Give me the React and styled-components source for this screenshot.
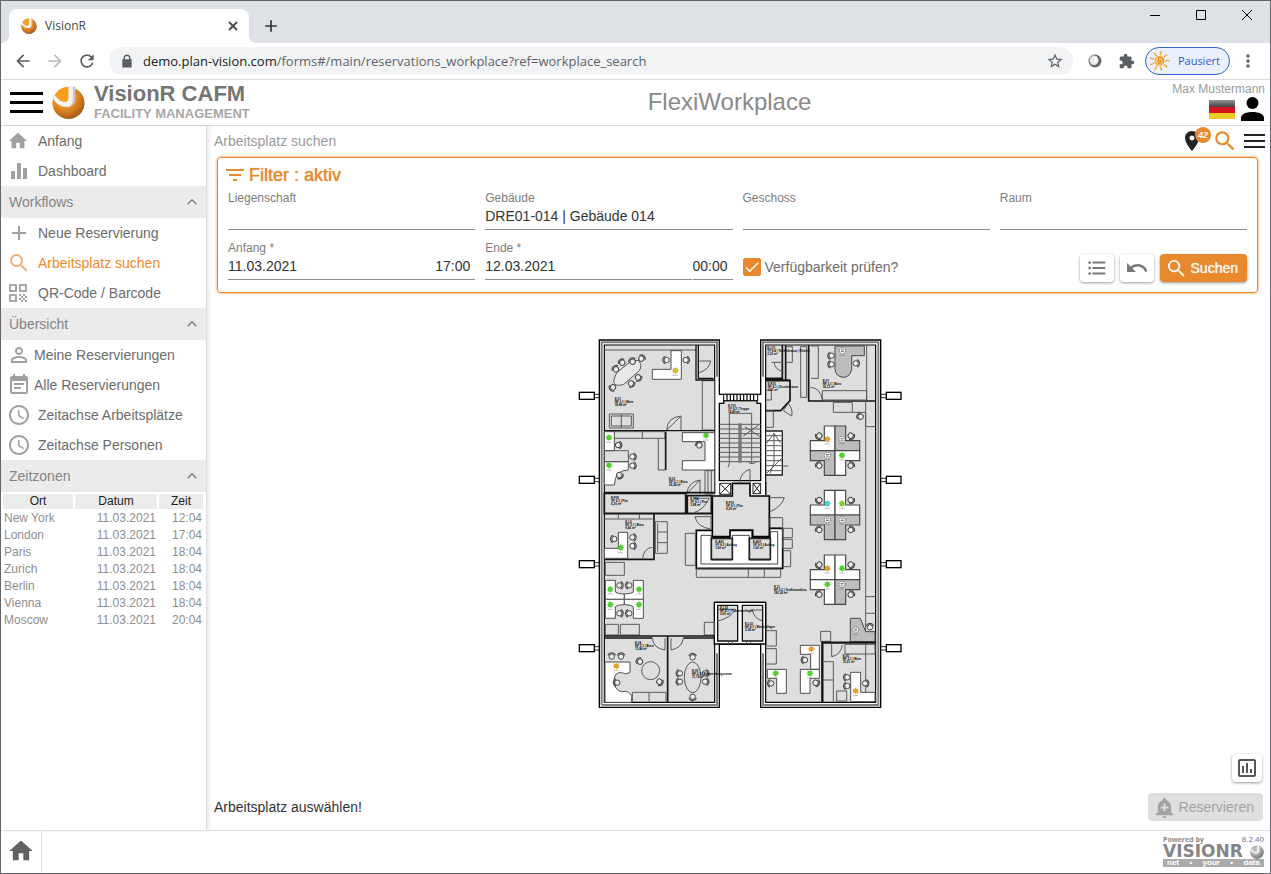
import React, { useState } from "react";
import styled, { createGlobalStyle, css } from "styled-components";
import {
  MdAccessTime, MdAdd, MdAddAlert, MdArrowBack, MdArrowForward, MdCheck, MdClose, MdEqualizer,
  MdEventNote, MdExpandLess, MdFilterList, MdFormatListBulleted, MdHome,
  MdMoreVert, MdOutlineAssessment, MdPersonOutline, MdPlace, MdRefresh,
  MdSearch, MdStarBorder, MdUndo,
} from "react-icons/md";

const ORANGE = "#e8892e";

const GlobalStyle = createGlobalStyle`
  *, *::before, *::after { box-sizing: border-box; }
  body { margin: 0; background: #fff; color: #333; font: 14px/16px "Liberation Sans", Arial, sans-serif; }
  button, input { font: inherit; color: inherit; }
  button { padding: 0; border: 0; background: none; cursor: pointer; }
  a { color: inherit; text-decoration: none; }
  svg { display: block; flex: none; }
`;

/* ---------- browser frame ---------- */

const Window = styled.div`
  display: flex;
  flex-direction: column;
  min-height: 100vh;
  border: 1px solid #66676a;
`;
const TabStrip = styled.div`
  display: flex;
  height: 42px;
  padding: 8px 17px 0 8px;
  background: #dee1e6;
`;
const Tab = styled.div`
  position: relative;
  display: flex;
  align-items: center;
  gap: 8px;
  width: 240px;
  padding: 0 6px 0 12px;
  border-radius: 8px 8px 0 0;
  background: #fff;
  color: #45484c;
  font: 12px/16px "Open Sans", sans-serif;
  &::before, &::after {
    content: "";
    position: absolute;
    bottom: 0;
    width: 8px;
    height: 8px;
  }
  &::before { left: -8px; background: radial-gradient(circle at 0 0, #dee1e6 8px, #fff 8px); }
  &::after { right: -8px; background: radial-gradient(circle at 100% 0, #dee1e6 8px, #fff 8px); }
`;
const TabName = styled.span` flex: 1; `;
const NewTab = styled.button` width: 44px; display: grid; place-items: center; color: #333; `;
const WindowButtons = styled.div`
  display: flex;
  align-items: flex-start;
  gap: 34px;
  margin-left: auto;
`;
const WindowButton = styled.button` display: block; width: 12px; height: 12px; color: #000; `;

const Toolbar = styled.div`
  display: flex;
  align-items: center;
  height: 37px;
  padding: 0 12px 0 12px;
  border-bottom: 1px solid #dadce0;
  color: #5a5d61;
`;
const NavButtons = styled.div` display: flex; gap: 12px; margin-right: 12px; `;
const IconButton = styled.button`
  display: grid;
  place-items: center;
  width: ${(p) => p.$width || 20}px;
  height: 28px;
  color: ${(p) => p.$tone || "inherit"};
`;
const Address = styled.div`
  flex: 1;
  min-width: 0;
  display: flex;
  align-items: center;
  gap: 9px;
  height: 28px;
  padding: 0 8px 0 11px;
  border-radius: 14px;
  background: #f1f3f4;
  font: 13px/20px "Open Sans", sans-serif;
`;
const Url = styled.span`
  flex: 1;
  min-width: 0;
  overflow: hidden;
  white-space: nowrap;
  color: #5f6368;
  b { font-weight: 400; color: #202124; }
`;
const Extensions = styled.div` display: flex; align-items: center; gap: 12px; margin: 0 8px 0 12px; `;
const Profile = styled.button`
  display: flex;
  align-items: center;
  gap: 8px;
  height: 28px;
  margin-right: 8px;
  padding: 0 9px 0 3px;
  border: 1px solid #2f64c8;
  border-radius: 14px;
  background: #e9f0fb;
  color: #3059c4;
  font: 11px/16px "Open Sans", sans-serif;
`;

/* ---------- application header ---------- */

const AppHeader = styled.header`
  display: grid;
  grid-template-columns: 280px 1fr 96px;
  align-items: center;
  height: 46px;
  padding: 0 5px 1px 9px;
  border-bottom: 1px solid #dedede;
`;
const Brand = styled.div` display: flex; align-items: center; gap: 9px; `;
const BrandText = styled.div`
  font-weight: 700;
  strong { display: block; font-size: 22px; line-height: 24px; color: #757575; }
  span { display: block; font-size: 13px; line-height: 16px; color: #a8a8a8; }
`;
const AppTitle = styled.h1` margin: 0; font-size: 24px; line-height: 28px; font-weight: 400; text-align: center; color: #8a8a8a; `;
const User = styled.div`
  justify-self: end;
  display: flex;
  flex-direction: column;
  align-items: flex-end;
  font-size: 12px;
  line-height: 14px;
  color: #9b9b9b;
`;
const UserIcons = styled.div` display: flex; align-items: center; gap: 5px; height: 26px; `;

/* ---------- sidebar ---------- */

const Body = styled.div` flex: 1; display: flex; `;
const Sidebar = styled.nav`
  width: 206px;
  flex: none;
  border-right: 1px solid #dedede;
  box-shadow: 2px 0 4px #0000001a;
`;
const IconSlot = styled.span`
  display: grid;
  place-items: center;
  width: 22px;
  height: 24px;
  color: ${(p) => (p.$active ? "#f2b077" : "#a0a0a0")};
`;
const NavLink = styled.a`
  display: flex;
  align-items: center;
  gap: ${(p) => (p.$tight ? 5 : 9)}px;
  height: 30px;
  padding-left: 6px;
  color: ${(p) => (p.$active ? "#ee8a28" : "#6c6c6c")};
`;
const SectionHeader = styled.button`
  display: flex;
  align-items: center;
  justify-content: space-between;
  width: 100%;
  height: 32px;
  padding: 0 4px 0 8px;
  background: #ebebeb;
  color: #848484;
`;
const ZoneTable = styled.table`
  width: 204px;
  table-layout: fixed;
  border-collapse: separate;
  border-spacing: 2px;
  font-size: 12px;
  line-height: 15px;
  color: #8e8e8e;
  th { padding: 0; background: #ececec; font-weight: 400; color: #222; }
  td { padding: 0 1px; text-align: right; }
  td:first-child { text-align: left; }
  th:nth-child(1) { width: 70px; }
  th:nth-child(3) { width: 44px; }
`;

/* ---------- main area ---------- */

const Main = styled.main` flex: 1; min-width: 0; display: flex; flex-direction: column; `;
const PageBar = styled.div`
  display: flex;
  align-items: center;
  justify-content: space-between;
  height: 31px;
  padding: 0 5px 2px 7px;
  color: #9b9b9b;
`;
const PageTools = styled.div` display: flex; align-items: center; gap: 6px; color: #222; `;
const PinButton = styled.button` position: relative; width: 26px; height: 24px; `;
const Badge = styled.span`
  position: absolute;
  top: -2px;
  right: -5px;
  z-index: 1;
  width: 16px;
  height: 16px;
  border-radius: 8px;
  background: ${ORANGE};
  color: #fff;
  font: italic 700 9px/16px "Liberation Sans", sans-serif;
  text-align: center;
`;
const FilterBox = styled.form`
  margin: 0 12px 0 10px;
  padding: 5px 10px 12px;
  border: 1px solid ${ORANGE};
  border-radius: 4px;
  box-shadow: 0 0 3px ${ORANGE};
`;
const FilterTitle = styled.h2`
  display: flex;
  align-items: center;
  gap: 2px;
  height: 24px;
  margin: 0 0 3px -5px;
  font-size: 18px;
  line-height: 20px;
  font-weight: 400;
  color: ${ORANGE};
  text-shadow: 0 0 1px ${ORANGE};
`;
const FieldGrid = styled.div`
  display: grid;
  grid-template-columns: repeat(4, minmax(0, 1fr));
  gap: 10px;
`;
const Field = styled.div`
  label { display: block; font-size: 12px; line-height: 16px; color: #7d7d7d; }
`;
const InputRow = styled.div` display: flex; gap: ${(p) => (p.$split ? 1 : 0)}px; `;
const Input = styled.input`
  flex: 1;
  min-width: 0;
  width: 100%;
  height: 24px;
  padding: 0 0 3px;
  border: 0;
  border-bottom: 1px solid #8c8c8c;
  background: none;
  outline: 0;
  color: #333;
  ${(p) => p.$time && css` flex: 0 0 40px; padding-right: 5px; text-align: right; `}
`;
const CheckLabel = styled.label`
  align-self: end;
  position: relative;
  display: flex;
  align-items: center;
  gap: 4px;
  height: 28px;
  margin-bottom: -1px;
  color: #6c6c6c;
  white-space: nowrap;
  input { appearance: none; width: 18px; height: 18px; margin: 0; border-radius: 2px; background: #fff; border: 1px solid ${ORANGE}; }
  input:checked { background: ${ORANGE}; }
  svg { position: absolute; left: 0; color: #fff; pointer-events: none; }
`;
const Actions = styled.div`
  align-self: end;
  display: flex;
  justify-content: flex-end;
  gap: 6px;
  margin-bottom: -2px;
`;
const Button = styled.button`
  display: flex;
  align-items: center;
  justify-content: center;
  gap: 3px;
  height: 28px;
  min-width: ${(p) => (p.$wide ? 0 : 34)}px;
  padding: ${(p) => (p.$wide ? "0 9px 0 5px" : 0)};
  border-radius: 4px;
  background: ${(p) => (p.$primary ? ORANGE : "#fff")};
  color: ${(p) => (p.$primary ? "#fff6ec" : "#777")};
  text-shadow: ${(p) => (p.$primary ? "0 0 1px #fff" : "none")};
  box-shadow: 0 1px 3px #00000066;
  &:disabled { background: #dfdfdf; color: #a3a3a3; box-shadow: none; cursor: default; }
`;
const Canvas = styled.div` flex: 1; display: flex; align-items: center; justify-content: center; `;
const ChartRow = styled.div` display: flex; justify-content: flex-end; padding: 0 8px 11px; `;
const ChartButton = styled(Button)` min-width: 30px; color: #555; `;
const BottomRow = styled.div`
  display: flex;
  align-items: center;
  justify-content: space-between;
  padding: 0 7px 9px 7px;
`;

const Footer = styled.footer`
  display: flex;
  justify-content: space-between;
  height: 43px;
  border-top: 1px solid #dedede;
`;
const HomeLink = styled.a`
  display: grid;
  place-items: center;
  width: 41px;
  padding-bottom: 2px;
  border-right: 1px solid #dedede;
  color: #616161;
`;
const Powered = styled.div` width: 101px; margin: 4px 6px 0 0; color: #8b8b8b; `;
const PoweredTop = styled.div`
  display: flex;
  justify-content: space-between;
  font: 700 7px/9px "Open Sans", sans-serif;
  span + span { font: 8px/9px "Liberation Sans", sans-serif; color: #77718c; }
`;
const Wordmark = styled.div`
  display: flex;
  align-items: center;
  justify-content: space-between;
  font: 700 17px/15px "DejaVu Sans", sans-serif;
  color: #858585;
`;
const Slogan = styled.div`
  display: flex;
  justify-content: space-between;
  padding: 0 4px;
  background: #ababab;
  color: #fff;
  font: 700 8px/8px "Liberation Sans", sans-serif;
`;

/* ---------- icons ---------- */

function Ball({ size, grey }) {
  const id = grey ? "ballGrey" : "ballOrange" + size;
  return (
    <svg width={size} height={size} viewBox="0 0 34 34" aria-hidden="true">
      <defs>
        <radialGradient id={id} cx=".38" cy=".32" r=".75">
          <stop offset="0" stopColor={grey ? "#d8d8d8" : "#ffb52e"} />
          <stop offset=".5" stopColor={grey ? "#a9a9a9" : "#e68a22"} />
          <stop offset="1" stopColor={grey ? "#6f6f6f" : "#9a5518"} />
        </radialGradient>
      </defs>
      <circle cx="17" cy="17.500" r="16.500" fill={`url(#${id})`} />
      <path d="M17 0h6.500v12c0 6-3 9.500-8.500 9.500C8 21.500 3 17 0 11l1.500-3.500C5 13 9 16.500 13 16.500c3 0 4-2 4-5z" fill="#f4f2f4" />
      <path d="M21.500 1h2.500v12c0 6-4 9-8 9.500 4-2 5.500-5 5.500-9z" fill="#c9c4cb" />
      <path d="M7 4.500C10 2 13 1 16.500 1v10c0 3-1 4.500-3 4.500-3 0-7-3-9.500-7z" fill={grey ? "#bdbdbd" : "#f6a021"} />
    </svg>
  );
}

function GreyRing() {
  return (
    <svg width="14" height="14" viewBox="0 0 14 14" aria-hidden="true">
      <circle cx="7" cy="7" r="6.500" fill="#6a6a6a" />
      <circle cx="6" cy="6.500" r="4.500" fill="#e9e9e9" />
      <path d="M6 2.500h3v4q0 2-2 2.500Q5 8 6 6z" fill="#fff" />
      <path d="M2 3Q4 1 7 1" stroke="#b5b5b5" strokeWidth="1.500" fill="none" />
    </svg>
  );
}

function Bars({ width, height, color }) {
  const t = height > 18 ? 3 : 2;
  const mid = Math.floor((height - t) / 2);
  return (
    <svg width={width} height={height} fill={color} aria-hidden="true">
      <rect width={width} height={t} />
      <rect y={mid} width={width} height={t} />
      <rect y={height - t} width={width} height={t} />
    </svg>
  );
}

function Lock() {
  return (
    <svg width="14" height="14" viewBox="0 0 24 24" fill="currentColor" aria-hidden="true">
      <path d="M18 9V7c0-3-2.500-6-6-6S6 4 6 7v2H4v14h16V9zM8.500 9V7c0-2 1.500-3.500 3.500-3.500S15.500 5 15.500 7v2z" />
    </svg>
  );
}

function Cross() {
  return (
    <svg width="10" height="10" stroke="#45484c" strokeWidth="1.800" aria-hidden="true">
      <path d="M1 1L9 9M9 1L1 9" />
    </svg>
  );
}

function Puzzle() {
  return (
    <svg width="16" height="16" viewBox="1 0 23 23" fill="currentColor" aria-hidden="true">
      <path d="M20.500 11H19V7c0-1.100-.9-2-2-2h-4V3.500a2.500 2.500 0 0 0-5 0V5H4c-1.100 0-2 .9-2 2v3.800h1.500a2.700 2.700 0 0 1 0 5.400H2V20c0 1.100.9 2 2 2h3.800v-1.500a2.700 2.700 0 0 1 5.400 0V22H17c1.100 0 2-.9 2-2v-4h1.500a2.500 2.500 0 0 0 0-5z" />
    </svg>
  );
}

function QrIcon() {
  return (
    <svg width="18" height="18" viewBox="0 0 18 18" aria-hidden="true">
      <g fill="none" stroke="currentColor" strokeWidth="1.800">
        <rect x="1" y="1" width="6" height="6" />
        <rect x="11" y="1" width="6" height="6" />
        <rect x="1" y="11" width="6" height="6" />
      </g>
      <path d="M10 10h2v2h-2zM14 10h2v2h-2zM12 12h2v2h-2zM16 12h2v2h-2zM10 14h2v2h-2zM14 14h2v2h-2zM12 16h2v2h-2zM16 16h2v2h-2z" fill="currentColor" />
    </svg>
  );
}

function Sun() {
  const rays = [0, 40, 80, 120, 160, 200, 240, 280, 320];
  return (
    <svg width="21" height="20" viewBox="-11 -10 22 20" fill="none" stroke="#f3a32f" strokeWidth="1.400" strokeLinecap="round" aria-hidden="true">
      <circle r="4.500" fill="#fbd79a" />
      <path d="M0 0c1-1 2 0 2 1s-2 2-3 1-1-4 1-5 4 1 4 3" stroke="#e98d16" />
      {rays.map((r) => <path key={r} d="M6.500 0q1.500-1 3.500 0" transform={`rotate(${r})`} />)}
    </svg>
  );
}

function Flag() {
  return (
    <svg width="26" height="19" aria-hidden="true">
      <defs>
        <linearGradient id="flagShade" x1="0" x2="0" y1="0" y2="1">
          <stop offset="0" stopColor="#fff" stopOpacity=".45" />
          <stop offset=".4" stopColor="#fff" stopOpacity="0" />
        </linearGradient>
      </defs>
      <rect width="26" height="7" fill="#3c3c3c" />
      <rect y="7" width="26" height="6" fill="#d8121b" />
      <rect y="13" width="26" height="6" fill="#ebc926" />
      <rect width="26" height="19" fill="url(#flagShade)" />
    </svg>
  );
}

/* ---------- floor plan ---------- */

const MARK = { g: "#4fd62e", y: "#d9bd1c", o: "#f0a321", c: "#3fd6d2", l: "#7bd62e", n: "#fff" };
const SHADE = { W: "#fff", G: "#bdbdbd" };

function Chair({ x, y, r = 0 }) {
  return (
    <g transform={`translate(${x} ${y}) rotate(${r})`} stroke="#484848">
      <circle r="8" fill="#eee" strokeWidth="3" />
      <path d="M-10 -6a12 12 0 0 0 0 12M-4 -11a12 12 0 0 0 -6 5M-4 11a12 12 0 0 1 -6 -5" fill="none" strokeWidth="3.500" />
    </g>
  );
}

function Mark({ x, y, k }) {
  const idle = k === "n";
  return (
    <g transform={`translate(${x} ${y})`}>
      {!idle && <path d="M-11 0H11M0 -11V11M-8 -8L8 8M8 -8L-8 8" stroke={MARK[k]} strokeWidth="2" />}
      <circle r={idle ? 9 : 7} fill={MARK[k]} stroke={idle ? "#444" : "#0003"} strokeWidth="2" strokeDasharray={idle ? "5 2" : undefined} />
      {idle && <path d="M-4 -2.500H4M-4 2.500H4" stroke="#222" strokeWidth="2" />}
      <path d="M-8 14H8" stroke="#777" strokeWidth="2" strokeDasharray="4 1 2 1" />
    </g>
  );
}

function Room({ x, y, lines }) {
  return (
    <text x={x} y={y} fill="#000" fontSize="9" fontWeight="700" fontFamily="Liberation Sans, sans-serif">
      {lines.map((l, i) => <tspan key={i} x={x} dy={i ? 9 : 0}>{l}</tspan>)}
    </text>
  );
}

const Chairs = ({ at }) => at.map(([x, y, r]) => <Chair key={x + "." + y} x={x} y={y} r={r} />);

/* Four L-shaped desks meeting in one point: top-left, top-right, bottom-left, bottom-right. */
function Cluster({ y, fills, marks }) {
  const quad = [[-1, -1], [1, -1], [-1, 1], [1, 1]];
  return (
    <g transform={`translate(795 ${y})`}>
      {quad.map(([sx, sy], i) => (
        <g key={i}>
          <path d="M0 0V74H32V30H74V0Z" transform={`scale(${sx} ${sy})`} fill={SHADE[fills[i]]} stroke="#484848" strokeWidth="3.500" />
          <Chair x={sx * 47} y={sy * 45} r={sx < 0 ? 45 * sy : 180 - 45 * sy} />
          <Mark x={sx < 0 ? -23 : 21} y={sy < 0 ? -34 : 14} k={marks[i]} />
        </g>
      ))}
    </g>
  );
}

function Plan() {
  const range = (n) => Array.from({ length: n }, (_, i) => i);
  const thin = { fill: "none", stroke: "#5a5a5a", strokeWidth: 3 };
  const wall = { fill: "none", stroke: "#141414", strokeWidth: 5 };
  const desk = { fill: "#fff", stroke: "#505050", strokeWidth: 3 };
  return (
    <svg width="329" height="380" viewBox="12 12 987 1140" role="img" aria-label="Grundriss Gebäude 014">
      {[197, 449, 702, 954].map((y) => (
        <g key={y} fill="#fff" stroke="#000" strokeWidth="4">
          <path d={`M73 ${y - 4}H88M73 ${y + 6}H88M932 ${y - 4}H949M932 ${y + 6}H949`} strokeWidth="2.500" />
          <rect x="28" y={y - 10} width="45" height="21" />
          <rect x="949" y={y - 10} width="44" height="21" />
        </g>
      ))}

      <path d="M88 30H448V193H572V30H932V1132H572V942H448V1132H88Z" fill="#fff" stroke="#000" strokeWidth="4" />
      <path d="M103 45H434V495H587V45H917V1117H587V817H434V1117H103Z" fill="#dedede" />
      <path d="M95 1125V37H441V140M95 1125H441V970M579 140V37H925V1125H579V970" fill="none" stroke="#808080" strokeWidth="6" />
      <path d="M434 490V45H103V1117H434V817H587V1117H917V45H587V495" fill="none" stroke="#000" strokeWidth="3.500" />

      {/* stair house and railing */}
      <path d="M448 220H461V212H561V220H572V452H448Z" fill="#dedede" stroke="#000" strokeWidth="4" />
      <path d="M461 193H563V212H461Z" fill="#fff" stroke="#000" strokeWidth="3" />
      <path d={range(9).map((i) => `M${471 + i * 10} 193V212`).join("")} stroke="#000" strokeWidth="3.500" />
      <g {...thin}>
        <path d={range(9).map((i) => `M448 ${283 + i * 14}H572`).join("")} />
        <path d="M478 400V250H545V400M478 400L474 412M525 290L570 320M566 285L520 318M535 396Q545 406 558 396" />
      </g>
      <rect x="505" y="280" width="10" height="118" fill="#777" />
      <path d="M434 455H487V497H434ZM540 455H587V497H540Z" fill="#fff" />
      <path d="M449 460H482V493H449ZL482 493M482 460L449 493M549 460H572V491H549ZL572 491M572 460L549 491" fill="#fff" stroke="#222" strokeWidth="3" />
      <path d="M587 455V495M434 455V492" {...wall} strokeWidth="4" />

      {/* lifts and hall */}
      <path d="M379 601H430V622H478V601H547V622H598V595H638V715H379Z" fill="#fff" stroke="#000" strokeWidth="5" />
      <path d="M393 616H424V690H487V616H538V690H601V605H623V702H393Z" fill="#fff" stroke="#222" strokeWidth="2.500" />
      <path d="M487 460H540V498H598V620H548V600H480V620H427V498H487Z" fill="#dedede" stroke="#000" strokeWidth="5" />
      <path d="M424 625H487V688H424ZM538 625H601V688H538Z" fill="#dedede" stroke="#222" strokeWidth="5" />
      <path d="M508 460Q512 425 540 418V460M346 610H376V706H346ZM379 717H632V742H379ZM535 717V742M583 717V742M600 563H638V593H600ZM638 595H667V623H638ZM638 628H667V655H638ZM640 662H662V710H640Z" {...thin} />

      {/* wash rooms */}
      <path d="M433 817H587V942H433Z" fill="#fff" stroke="#000" strokeWidth="4" />
      <path d="M443 826H503V933H443ZM517 826H578V933H517Z" fill="#dedede" stroke="#111" strokeWidth="4" />
      <path d="M443 873Q480 865 497 838H443M548 840Q550 865 578 873M540 840H578M475 933V942M487 933V942M530 933V942M542 933V942" {...thin} />

      {/* room E.01 */}
      <path d="M103 60H378M397 152H434V300H397ZM118 252H190V294H118ZM124 258H184V288H124ZM154 252V294M290 300L333 258M290 300Q292 262 333 258V300M388 93H422Q418 118 388 128" {...thin} />
      <path d="M378 45V150H434M385 45V145H430M103 302H434" {...wall} strokeWidth="4" />
      <path d="M303 62H334V148H247V118H303Z" {...desk} />
      <path d="M132 148Q128 165 145 166L160 164L208 122Q218 106 206 92L188 90L140 128Z" {...thin} fill="#e8e8e8" />
      <Chairs at={[[138, 118, 50], [157, 98, 50], [188, 95, 60], [214, 86, 130], [129, 172, -40], [183, 160, -130], [204, 142, -130], [290, 90, 0], [347, 90, 180]]} />
      <Mark x={316} y={122} k="y" />

      {/* rooms E.02 and E.03 */}
      <path d="M103 305H285V325H125M217 305V325M265 325V420H285M405 422H434V492H405ZM414 422V492M424 422V492M350 492L390 450V492M350 492Q355 455 390 450" {...thin} />
      <path d="M287 305V420M103 488H434" {...wall} />
      <path d="M103 305H133V362H103ZM103 395H175V420Q135 420 133 465H103ZM337 308H434V420H337V392H405V335H337Z" {...desk} />
      <path d="M103 362H175V395H103Z" {...thin} />
      <Chairs at={[[144, 345, 180], [187, 380, 180], [187, 407, 180], [148, 435, 230], [388, 346, 60]]} />
      <Mark x={117} y={323} k="g" /><Mark x={117} y={406} k="g" /><Mark x={408} y={316} k="g" />

      {/* corridor */}
      <path d="M103 490H347V550H103ZM352 497H424V550H352ZM103 551H427" {...wall} />
      <path d="M372 505H418Q400 540 372 548M375 560H423V598Q380 590 375 560" {...thin} />

      {/* room E.L5 */}
      <path d="M252 551V688H103" {...wall} />
      <path d="M103 567H248M145 553V567M208 553V567M256 575H292V670H256ZM263 580V665M263 606H292M263 638H292M218 687Q220 655 247 652M106 697H163V736H106Z" {...thin} />
      <path d="M103 655H145V607H173V685H103Z" {...desk} />
      <Chairs at={[[133, 627, 0], [187, 622, 180], [187, 648, 180]]} />
      <Mark x={152} y={653} k="g" />

      {/* four desks */}
      {[[1, 1], [-1, 1], [1, -1], [-1, -1]].map(([sx, sy], i) => (
        <g key={i} transform={`translate(163 808) scale(${sx} ${sy})`}>
          <path d="M-57 -57H-27V-22Q-20 -16 0 -16V0H-57Z" {...desk} />
          <Chair x={-15} y={-42} r={180} />
        </g>
      ))}
      <Mark x={121} y={778} k="g" /><Mark x={207} y={778} k="g" /><Mark x={121} y={824} k="g" /><Mark x={207} y={824} k="g" />
      <path d="M106 883H145V915H106ZM151 883H208V915H151ZM403 877H434V915H403Z" {...thin} />

      {/* rooms E.04 and E.05 */}
      <path d="M103 918H434M103 924H247M293 918V1117M340 924H434" {...wall} />
      <path d="M247 925Q250 955 285 960V925M303 925V960Q335 955 340 925M187 1087H288V1117M187 1087V1117M237 1087V1117" {...thin} />
      <path d="M105 996H180V1028Q165 1035 155 1028Q135 1025 132 1050Q132 1080 155 1085Q180 1080 185 1100V1117H105Z" {...desk} />
      <circle cx="242" cy="1022" r="27" {...thin} />
      <ellipse cx="368" cy="1042" rx="25" ry="46" {...thin} />
      <Chairs at={[[125, 980, 90], [153, 980, 90], [142, 1058, 0], [210, 995, 40], [268, 1055, 220], [368, 982, 90], [368, 1100, 270], [330, 1030, 0], [330, 1055, 0], [405, 1030, 180], [405, 1055, 180]]} />
      <Mark x={139} y={1008} k="o" />

      {/* upper right rooms */}
      <path d="M637 45V145H587M647 45V150H587M587 152H660V212L632 242H587M660 150H645M716 45V213H917" {...wall} />
      <path d="M605 97H640M612 97Q615 120 640 125M650 50H667V97H650M692 50H710V202H692ZM723 48H745V145H723M757 182H890V210H757ZM890 48V210M722 172Q752 175 757 210M640 242L655 220Q670 240 665 258L640 242M587 243H610V292H587M790 217H847V247H790ZM847 247H887V290H917M887 217V1115M887 800H917M887 850H917M587 180H604V210H587" {...thin} />
      <path d="M795 48H883V77H845V118Q840 142 820 142Q797 140 795 118Z" fill="#bdbdbd" stroke="#484848" strokeWidth="3" />
      <path d="M587 303H637V435H587Z" fill="#fff" stroke="#222" strokeWidth="4" />
      <path d={range(8).map((i) => `M590 ${317 + i * 15}H635`).join("") + "M590 340L612 310L632 340M612 310V400M590 430L635 385M600 430L612 400M635 408H655"} {...thin} />
      <Chairs at={[[785, 77, 0], [785, 103, 0], [857, 100, 180], [872, 260, 30]]} />
      <Mark x={817} y={62} k="n" />

      {/* open office */}
      <Cluster y={362} fills="WGGW" marks="onng" />
      <Cluster y={555} fills="WWGG" marks="clnn" />
      <Cluster y={749} fills="WWWG" marks="oggn" />
      <path d="M598 503H643Q635 530 600 545M587 902H619V948H587M587 956H619V1002H587M752 904H782V934H752Z" {...thin} />
      <path d="M841 865H871L887 905H915V935H841Z" fill="#bdbdbd" stroke="#484848" strokeWidth="3" />
      <path d="M691 946H748V1018H722V973H691ZM691 1018H748V1045H720V1090H691ZM592 1018H649V1090H620V1045H592Z" {...desk} />
      <Chairs at={[[900, 892, 90], [705, 990, 0], [737, 1058, 200], [604, 1060, 0]]} />
      <Mark x={857} y={900} k="n" /><Mark x={724} y={957} k="o" /><Mark x={720} y={1030} k="g" /><Mark x={617} y={1030} k="g" />

      {/* room E.06 */}
      <path d="M917 938H757V1117" {...wall} strokeWidth="7" />
      <path d="M785 940V980Q812 975 817 945M825 943H915V972H825ZM760 995H790V1115M760 1050H790M800 1083H830V1113H800Z" {...thin} />
      <path d="M842 1027H872V1087H915V1115H842Z" {...desk} />
      <Chairs at={[[832, 1042, 0], [832, 1068, 0], [885, 1060, 180]]} />
      <Mark x={857} y={1083} k="o" />

      <Room x={134} y={209} lines={["E.01", "NF 2.1 | Büro", "39,98 m²"]} />
      <Room x={297} y={449} lines={["E.03", "NF 2.1 | Büro", "26,24 m²"]} />
      <Room x={123} y={506} lines={["E.F05", "VF 9.1 | Flur", "6,20 m²"]} />
      <Room x={361} y={509} lines={["E.F04", "VF 9.1 | Flur", "1,88 m²"]} />
      <Room x={474} y={232} lines={["E.T01", "VF 9.2 | Treppe", "18,80 m²"]} />
      <Room x={468} y={521} lines={["E.F01", "VF 9.1 | Flur", "9,20 m²"]} />
      <Room x={166} y={580} lines={["E.L5", "NF 2.1 | Büro", "9,46 m²"]} />
      <Room x={436} y={638} lines={["E.A02", "VF 9.3 | Aufzug", "1,60 m²"]} />
      <Room x={549} y={638} lines={["E.A01", "VF 9.3 | Aufzug", "1,60 m²"]} />
      <Room x={592} y={58} lines={["E.L01", "TF 8.4 | Technikraum | Elektro", "2,20 m²"]} />
      <Room x={593} y={166} lines={["E.K01", "NF 4.1 | Druckerraum", "3,81 m²"]} />
      <Room x={758} y={157} lines={["E.07", "NF 2.1 | Büro", "14,12 m²"]} />
      <Room x={612} y={773} lines={["E.11", "NF 2.2 | Großraumbüro", "181,36 m²"]} />
      <Room x={450} y={836} lines={["E.L02", "NF 4.1 | Putzmittellager", "2,60 m²"]} />
      <Room x={525} y={884} lines={["E.L03", "NF 4.1 | Materiallager", "2,38 m²"]} />
      <Room x={195} y={942} lines={["E.04", "NF 2.1 | Büro", "13,84 m²"]} />
      <Room x={366} y={1025} lines={["E.05", "NF 2.3 | Besprechungsraum", "11,74 m²"]} />
      <Room x={818} y={981} lines={["E.06", "NF 2.1 | Büro", "10,21 m²"]} />
    </svg>
  );
}

/* ---------- page ---------- */

const GROUPS = [
  { items: [["Anfang", MdHome, 22], ["Dashboard", MdEqualizer, 24]] },
  { title: "Workflows", items: [["Neue Reservierung", MdAdd, 24], ["Arbeitsplatz suchen", MdSearch, 24, "active"], ["QR-Code / Barcode", QrIcon, 18]] },
  { title: "Übersicht", items: [["Meine Reservierungen", MdPersonOutline, 24, "tight"], ["Alle Reservierungen", MdEventNote, 24, "tight"], ["Zeitachse Arbeitsplätze", MdAccessTime, 24], ["Zeitachse Personen", MdAccessTime, 24]] },
];
const ZONES = [["New York", "12:04"], ["London", "17:04"], ["Paris", "18:04"], ["Zurich", "18:04"], ["Berlin", "18:04"], ["Vienna", "18:04"], ["Moscow", "20:04"]];

function TextField({ id, label, value }) {
  return (
    <Field>
      <label htmlFor={id}>{label}</label>
      <InputRow><Input id={id} defaultValue={value} /></InputRow>
    </Field>
  );
}

function DateField({ id, label, date, time, split }) {
  return (
    <Field>
      <label htmlFor={id}>{label} *</label>
      <InputRow $split={split}>
        <Input id={id} defaultValue={date} />
        <Input $time aria-label={`${label} Uhrzeit`} defaultValue={time} />
      </InputRow>
    </Field>
  );
}

export default function App() {
  const [check, setCheck] = useState(true);
  return (
    <Window>
      <GlobalStyle />
      <TabStrip>
        <Tab>
          <Ball size={16} />
          <TabName>VisionR</TabName>
          <IconButton aria-label="Tab schließen"><Cross /></IconButton>
        </Tab>
        <NewTab aria-label="Neuer Tab"><MdAdd size={20} /></NewTab>
        <WindowButtons>
          <WindowButton aria-label="Minimieren"><svg width="12" height="12" stroke="currentColor"><path d="M1 6.500H11" /></svg></WindowButton>
          <WindowButton aria-label="Maximieren"><svg width="12" height="12" fill="none" stroke="currentColor"><path d="M1.500 1.500H10.500V10.500H1.500Z" /></svg></WindowButton>
          <WindowButton aria-label="Schließen"><svg width="12" height="12" stroke="currentColor"><path d="M1 1L11 11M11 1L1 11" /></svg></WindowButton>
        </WindowButtons>
      </TabStrip>
      <Toolbar>
        <NavButtons>
          <IconButton aria-label="Zurück"><MdArrowBack size={20} /></IconButton>
          <IconButton aria-label="Vorwärts" $tone="#b9bbbe"><MdArrowForward size={20} /></IconButton>
          <IconButton aria-label="Neu laden"><MdRefresh size={20} /></IconButton>
        </NavButtons>
        <Address>
          <Lock />
          <Url><b>demo.plan-vision.com</b>/forms#/main/reservations_workplace?ref=workplace_search</Url>
          <IconButton aria-label="Lesezeichen"><MdStarBorder size={18} /></IconButton>
        </Address>
        <Extensions>
          <IconButton aria-label="VisionR"><GreyRing /></IconButton>
          <IconButton aria-label="Erweiterungen"><Puzzle /></IconButton>
        </Extensions>
        <Profile><Sun />Pausiert</Profile>
        <IconButton aria-label="Menü"><MdMoreVert size={20} /></IconButton>
      </Toolbar>

      <AppHeader>
        <Brand>
          <button aria-label="Navigation"><Bars width={33} height={21} color="#000" /></button>
          <Ball size={33} />
          <BrandText><strong>VisionR CAFM</strong><span>FACILITY MANAGEMENT</span></BrandText>
        </Brand>
        <AppTitle>FlexiWorkplace</AppTitle>
        <User>
          Max Mustermann
          <UserIcons>
            <Flag />
            <svg width="25" height="24" viewBox="0 0 25 24" aria-hidden="true">
              <circle cx="12.500" cy="6" r="6" />
              <path d="M1 24v-3c0-4 5-6 11.500-6S24 17 24 21v3z" />
            </svg>
          </UserIcons>
        </User>
      </AppHeader>

      <Body>
        <Sidebar>
          {GROUPS.map((g, i) => (
            <React.Fragment key={i}>
              {g.title && <SectionHeader>{g.title}<MdExpandLess size={20} /></SectionHeader>}
              {g.items.map(([name, Icon, size, mode]) => (
                <NavLink key={name} href="#" $active={mode === "active"} $tight={mode === "tight"}>
                  <IconSlot $active={mode === "active"}><Icon size={size} /></IconSlot>{name}
                </NavLink>
              ))}
            </React.Fragment>
          ))}
          <SectionHeader>Zeitzonen<MdExpandLess size={20} /></SectionHeader>
          <ZoneTable>
            <thead><tr><th>Ort</th><th>Datum</th><th>Zeit</th></tr></thead>
            <tbody>
              {ZONES.map(([city, time]) => <tr key={city}><td>{city}</td><td>11.03.2021</td><td>{time}</td></tr>)}
            </tbody>
          </ZoneTable>
        </Sidebar>

        <Main>
          <PageBar>
            Arbeitsplatz suchen
            <PageTools>
              <PinButton aria-label="42 Plätze"><MdPlace size={24} /><Badge>42</Badge></PinButton>
              <IconButton aria-label="Suche" $tone={ORANGE} $width={26}><MdSearch size={26} /></IconButton>
              <button aria-label="Menü"><Bars width={21} height={14} color="#222" /></button>
            </PageTools>
          </PageBar>

          <FilterBox onSubmit={(e) => e.preventDefault()}>
            <FilterTitle><MdFilterList size={24} />Filter : aktiv</FilterTitle>
            <FieldGrid>
              <TextField id="site" label="Liegenschaft" value="" />
              <TextField id="building" label="Gebäude" value="DRE01-014 | Gebäude 014" />
              <TextField id="floor" label="Geschoss" value="" />
              <TextField id="room" label="Raum" value="" />
              <DateField id="from" label="Anfang" date="11.03.2021" time="17:00" />
              <DateField id="to" label="Ende" date="12.03.2021" time="00:00" split />
              <CheckLabel>
                <input type="checkbox" checked={check} onChange={(e) => setCheck(e.target.checked)} />
                {check && <MdCheck size={18} />}
                Verfügbarkeit prüfen?
              </CheckLabel>
              <Actions>
                <Button type="button" aria-label="Liste"><MdFormatListBulleted size={22} /></Button>
                <Button type="button" aria-label="Zurücksetzen"><MdUndo size={24} /></Button>
                <Button type="submit" $primary $wide><MdSearch size={23} />Suchen</Button>
              </Actions>
            </FieldGrid>
          </FilterBox>

          <Canvas><Plan /></Canvas>
          <ChartRow><ChartButton aria-label="Auswertung"><MdOutlineAssessment size={24} /></ChartButton></ChartRow>
          <BottomRow>
            Arbeitsplatz auswählen!
            <Button disabled $wide><MdAddAlert size={23} />Reservieren</Button>
          </BottomRow>
        </Main>
      </Body>

      <Footer>
        <HomeLink href="#" aria-label="Startseite"><MdHome size={28} /></HomeLink>
        <Powered>
          <PoweredTop><span>Powered by</span><span>8.2.40</span></PoweredTop>
          <Wordmark>VISIONR<Ball size={14} grey /></Wordmark>
          <Slogan><span>net</span><span>•</span><span>your</span><span>•</span><span>data</span></Slogan>
        </Powered>
      </Footer>
    </Window>
  );
}
